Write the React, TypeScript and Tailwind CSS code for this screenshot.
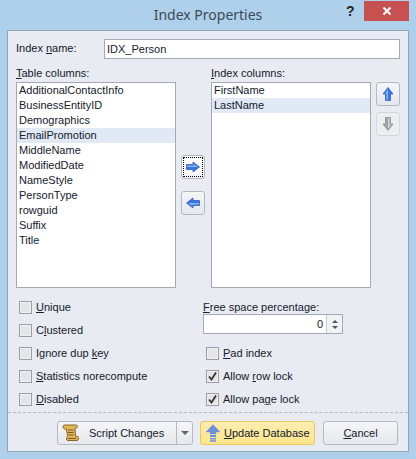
const tableColumns = ['AdditionalContactInfo', 'BusinessEntityID', 'Demographics', 'EmailPromotion', 'MiddleName', 'ModifiedDate', 'NameStyle', 'PersonType', 'rowguid', 'Suffix', 'Title']
const indexColumns = ['FirstName', 'LastName']

function ArrowIcon({ dir, gray }: { dir: 'up' | 'down' | 'left' | 'right'; gray?: boolean }) {
  const rotate = { up: 0, right: 90, down: 180, left: 270 }[dir]
  const fill = gray ? '#a3a5a8' : '#3a74e0'
  const edge = gray ? '#8b8d90' : '#3560b8'
  return (
    <svg width="16" height="16" viewBox="0 0 16 16" style={{ transform: `rotate(${rotate}deg)` }}>
      <path d="M8 1.5 L13 8 L10.5 8 L10.5 14.5 L5.5 14.5 L5.5 8 L3 8 Z" fill={fill} stroke={edge} strokeWidth="0.8" strokeLinejoin="round" />
      <path d="M8 3 L5 7.5 L6.5 7.5 L6.5 14 L8 14 Z" fill={gray ? '#cfd0d2' : '#86b2f6'} />
    </svg>
  )
}

function ScrollIcon() {
  return (
    <svg width="18" height="18" viewBox="0 0 18 18">
      <path d="M2.5 1 H14 C15.5 1 16 3 14.5 4 L13 4.5 L13.5 12.5 H16 C17 14 16.5 16.5 15 16.5 H6 C4 16.5 4 13.5 5.5 12.5 L4.5 5 H2.5 C0.5 4.5 0.5 1 2.5 1 Z" fill="#e2b75c" stroke="#8a6524" strokeWidth="1" />
      <path d="M6 6 H11.5 M6 8.5 H11.5 M6.5 11 H11.5 M6 14.5 H14" stroke="#7a5520" strokeWidth="1" />
    </svg>
  )
}

function UpdateIcon() {
  return (
    <svg width="16" height="18" viewBox="0 0 16 18">
      <path d="M8 0.5 L15 8 H11 V10 H5 V8 H1 Z" fill="#6f8fdc" stroke="#7f9ae0" strokeWidth="0.5" />
      <path d="M5 11 H11 V13 H5 Z M5 14 H11 V15.5 H5 Z M5 16.3 H11 V17.8 H5 Z" fill="#6f8fdc" />
    </svg>
  )
}

function ListBox({ items, selected }: { items: string[]; selected: string }) {
  return (
    <div className="h-[206px] w-[160px] border border-[#a4aab2] bg-white">
      {items.map((item) => (
        <div key={item} className={`h-[15px] pl-[2px] leading-[15px] ${item === selected ? 'bg-[#e0e9f4]' : ''}`}>
          {item}
        </div>
      ))}
    </div>
  )
}

function SmallButton({ dir, gray, focused }: { dir: 'up' | 'down' | 'left' | 'right'; gray?: boolean; focused?: boolean }) {
  return (
    <div className={`flex h-[24px] w-[24px] items-center justify-center rounded-[3px] border ${gray ? 'border-[#d3d6db] bg-[#eceef2]' : focused ? 'border-[#b5b9bf] bg-gradient-to-b from-white to-[#f3f4f6]' : 'border-[#b5b9bf] bg-gradient-to-b from-[#f5f6f8] to-[#e4e7ec]'}`}>
      {focused ? (
        <div className="flex h-[20px] w-[20px] items-center justify-center border border-dotted border-black">
          <ArrowIcon dir={dir} gray={gray} />
        </div>
      ) : (
        <ArrowIcon dir={dir} gray={gray} />
      )}
    </div>
  )
}

function Check({ label, checked }: { label: React.ReactNode; checked?: boolean }) {
  return (
    <div className="flex h-[13px] items-center gap-[4px]">
      <div className="flex h-[13px] w-[13px] items-center justify-center border border-[#9b9fa5] bg-[#e3e5e9] shadow-[inset_0_0_0_1px_#eff0f3]">
        {checked && (
          <svg width="11" height="11" viewBox="0 0 11 11">
            <path d="M2 5.5 L4.5 8.5 L9 1.5" fill="none" stroke="#333" strokeWidth="1.8" />
          </svg>
        )}
      </div>
      <span className="whitespace-nowrap">{label}</span>
    </div>
  )
}

export default function App() {
  return (
    <div className="flex h-[459px] w-[416px] flex-col bg-[#aed0ea] text-[11px] text-[#14202c] [font-family:'Liberation_Sans',sans-serif]">
      <div className="relative flex h-[30px] items-center justify-center">
        <span className="text-[14px] leading-[30px] text-[#3c4a58] [font-family:'Noto_Sans',sans-serif]">Index Properties</span>
        <span className="absolute left-[346px] top-[1px] text-[14px] font-bold text-[#222]">?</span>
        <div className="absolute left-[364px] top-[1px] flex h-[20px] w-[45px] items-center justify-center bg-[#c75050]">
          <svg width="10" height="10" viewBox="0 0 10 10">
            <path d="M1.5 1.5 L8.5 8.5 M8.5 1.5 L1.5 8.5" stroke="#fff" strokeWidth="2" />
          </svg>
        </div>
      </div>

      <div className="mx-[7px] flex h-[422px] flex-col border border-[#8fa5b8] bg-[#e8ebf1]">
        <div className="flex h-[28px] items-end pl-[8px] pr-[7px]">
          <label className="w-[88px] pb-[3px]">Index <u>n</u>ame:</label>
          <input readOnly value="IDX_Person" className="h-[20px] w-[296px] border border-[#a4aab2] bg-white pl-[2px] outline-none" />
        </div>

        <div className="mt-[6px] flex pl-[8px]">
          <div className="w-[165px]">
            <div className="h-[17px] leading-[17px]"><u>T</u>able columns:</div>
            <ListBox items={tableColumns} selected="EmailPromotion" />
          </div>
          <div className="flex w-[30px] flex-col gap-[12px] pt-[90px]">
            <SmallButton dir="right" focused />
            <SmallButton dir="left" />
          </div>
          <div className="w-[165px]">
            <div className="h-[17px] leading-[17px]"><u>I</u>ndex columns:</div>
            <ListBox items={indexColumns} selected="LastName" />
          </div>
          <div className="flex flex-col gap-[6px] pt-[17px]">
            <SmallButton dir="up" />
            <SmallButton dir="down" gray />
          </div>
        </div>

        <div className="mt-[13px] flex pl-[11px]">
          <div className="flex w-[184px] flex-col gap-[10px]">
            <Check label={<><u>U</u>nique</>} />
            <Check label={<>C<u>l</u>ustered</>} />
            <Check label={<>I<u>g</u>nore dup <u>k</u>ey</>} />
            <Check label={<><u>S</u>tatistics norecompute</>} />
            <Check label={<><u>D</u>isabled</>} />
          </div>
          <div className="flex flex-col">
            <div className="h-[12px] leading-[12px]"><u>F</u>ree space percentage:</div>
            <div className="mt-[1px] flex h-[20px] w-[140px] border border-[#a4aab2] bg-white">
              <div className="flex-1 pr-[3px] text-right leading-[18px]">0</div>
              <div className="flex w-[16px] flex-col items-center justify-center gap-[3px] border-l border-[#c8ccd2] bg-[#f2f3f6]">
                <div className="h-0 w-0 border-x-[3px] border-b-[3px] border-x-transparent border-b-[#555]" />
                <div className="h-0 w-0 border-x-[3px] border-t-[3px] border-x-transparent border-t-[#555]" />
              </div>
            </div>
            <div className="mt-[13px] flex flex-col gap-[10px] pl-[3px]">
              <Check label={<><u>P</u>ad index</>} />
              <Check label={<>Allow <u>r</u>ow lock</>} checked />
              <Check label={<>Allow pa<u>g</u>e lock</>} checked />
            </div>
          </div>
        </div>

        <div className="mt-[6px] flex-1 border-t border-dashed border-[#b4b8be]">
          <div className="flex pl-[49px] pt-[8px]">
            <div className="flex h-[24px] w-[136px] rounded-[3px] border border-[#b5b9bf] bg-gradient-to-b from-[#f5f6f8] to-[#e6e8ed]">
              <div className="flex flex-1 items-center gap-[9px] pl-[4px]">
                <ScrollIcon />
                <span className="whitespace-nowrap">Script Changes</span>
              </div>
              <div className="flex w-[16px] items-center justify-center border-l border-[#b5b9bf]">
                <div className="h-0 w-0 border-x-[4px] border-t-[4px] border-x-transparent border-t-[#666]" />
              </div>
            </div>
            <div className="ml-[7px] flex h-[24px] w-[115px] items-center gap-[3px] rounded-[3px] border border-[#e8c860] bg-gradient-to-b from-[#fdeeb0] to-[#fce58c] pl-[4px]">
              <UpdateIcon />
              <span className="whitespace-nowrap"><u>U</u>pdate Database</span>
            </div>
            <div className="ml-[8px] flex h-[24px] w-[75px] items-center justify-center rounded-[3px] border border-[#b5b9bf] bg-gradient-to-b from-[#f5f6f8] to-[#e6e8ed]">
              <span><u>C</u>ancel</span>
            </div>
          </div>
        </div>
      </div>
    </div>
  )
}
